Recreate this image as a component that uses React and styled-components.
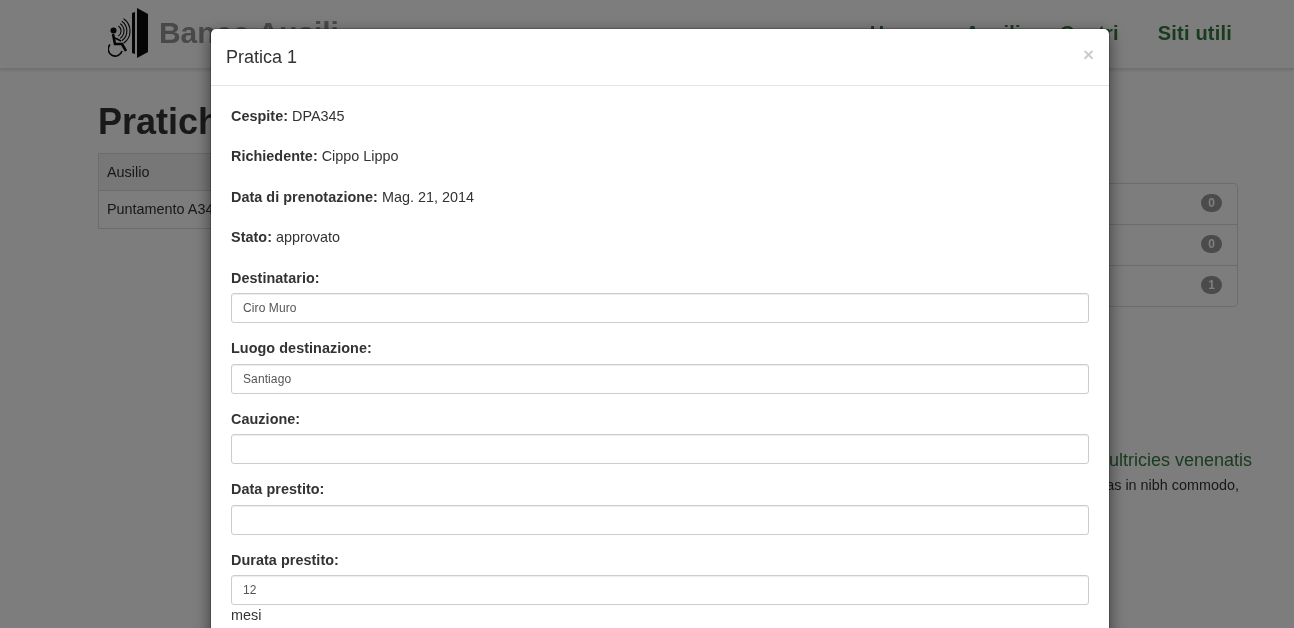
import React from "react";
import styled, { createGlobalStyle } from "styled-components";

const Global = createGlobalStyle`
  html, body { margin: 0; padding: 0; height: 100%; overflow: hidden; background: #fff; }
  body { font-family: Helvetica, "Liberation Sans", Arial, sans-serif; font-size: 14.4px; line-height: 1.42; color: #333; text-rendering: optimizeSpeed; }
  b { letter-spacing: .03px; }
  * { box-sizing: border-box; }
`;

const Page = styled.div`
  will-change: transform;
`;
const Header = styled.header`
  height: 69px;
  border-bottom: 1px solid #e7e7e7;
  box-shadow: 0 1px 3px rgba(0,0,0,.15);
  display: flex;
  align-items: center;
  justify-content: space-between;
  padding: 0 62px 2px 108px;
`;
const Brand = styled.div`
  display: flex;
  align-items: center;
  gap: 8px;
  font-size: 29.9px;
  font-weight: 700;
  color: #969696;
`;
const Nav = styled.nav`
  display: flex;
  gap: 39px;
`;
const NavLink = styled.a`
  font-size: 20px;
  font-weight: 700;
  letter-spacing: .2px;
  color: #347a40;
`;
const Main = styled.main`
  display: grid;
  grid-template-columns: 1fr 300px;
  gap: 30px;
  padding: 0 56px 0 98px;
`;
const Title = styled.h1`
  margin: 31px 0 9px;
  font-size: 36px;
  line-height: 44px;
  font-weight: 700;
`;
const Table = styled.table`
  width: 100%;
  border-collapse: collapse;
  th, td { border: 1px solid #ddd; padding: 8px; font-weight: 400; text-align: left; }
  th { background: #f2f2f2; }
`;
const Side = styled.aside`
  padding-top: 114px;
`;
const List = styled.ul`
  list-style: none;
  margin: 0;
  padding: 0;
  border: 1px solid #ddd;
  border-radius: 4px;
`;
const Item = styled.li`
  display: flex;
  justify-content: flex-end;
  align-items: center;
  height: 40px;
  padding: 0 15px 2px 10px;
  & + & { height: 41px; border-top: 1px solid #ddd; }
`;
const Badge = styled.span`
  min-width: 21px;
  height: 18px;
  border-radius: 10px;
  background: #9a9a9a;
  color: #fff;
  font-size: 12px;
  font-weight: 700;
  line-height: 18px;
  text-align: center;
`;
const News = styled.div`
  margin: 141px -14px 0 0;
  text-align: right;
  white-space: nowrap;
`;
const NewsTitle = styled.div`
  font-size: 18px;
  line-height: 25px;
  color: #347a40;
`;
const NewsText = styled.div`
  margin: 2px 13px 0 0;
  line-height: 21px;
`;

const Backdrop = styled.div`
  position: fixed;
  inset: 0;
  background: rgba(0,0,0,.51);
`;
const Dialog = styled.div`
  position: fixed;
  top: 28px;
  left: 210px;
  width: 900px;
  background: #fff;
  border: 1px solid rgba(0,0,0,.2);
  background-clip: padding-box;
  border-radius: 6px;
  box-shadow: 0 5px 15px rgba(0,0,0,.5);
  will-change: transform;
`;
const DialogHeader = styled.div`
  display: flex;
  justify-content: space-between;
  align-items: flex-start;
  padding: 15px;
  border-bottom: 1px solid #e5e5e5;
`;
const DialogTitle = styled.h4`
  margin: 0;
  font-size: 18px;
  font-weight: 400;
  line-height: 26px;
`;
const Close = styled.button`
  border: 0;
  background: none;
  padding: 0;
  margin-top: 1px;
  font-family: inherit;
  font-size: 19px;
  font-weight: 700;
  line-height: 1;
  color: #000;
  opacity: .2;
`;
const DialogBody = styled.div`
  padding: 20px;
`;
const Info = styled.p`
  margin: 0 0 20px;
`;
const Field = styled.div`
  margin-bottom: 15px;
`;
const Label = styled.label`
  display: block;
  margin-bottom: 5px;
  font-weight: 700;
  letter-spacing: .05px;
`;
const Input = styled.input`
  display: block;
  width: 100%;
  height: 30px;
  padding: 5px 11px;
  font-family: inherit;
  font-size: 12px;
  line-height: 1.5;
  letter-spacing: .1px;
  color: #555;
  background: #fff;
  border: 1px solid #ccc;
  border-radius: 3px;
  box-shadow: inset 0 1px 1px rgba(0,0,0,.075);
`;

const Logo = () => (
  <svg width="43" height="52" viewBox="0 0 43 52" fill="none">
    <path d="M24 6 L27 5 L27 47 L24 46 Z" fill="#0c0c0c" />
    <path d="M29 1 L40 7 L40 45 L29 51 Z" fill="#0c0c0c" />
    <circle cx="5.5" cy="23.5" r="3" fill="#0c0c0c" />
    <path d="M5 27 L7 37 L14 37 L18 44" stroke="#0c0c0c" strokeWidth="2.6" />
    <path d="M7 31 L13 34" stroke="#0c0c0c" strokeWidth="1.6" />
    <path d="M2 37.5 A7 7 0 1 0 14 44" stroke="#0c0c0c" strokeWidth="1.6" />
    <path d="M10.4 19 A6 6 0 0 1 10.4 29 M12.1 16.6 A9 9 0 0 1 12.1 31.4 M13.8 14.2 A12 12 0 0 1 13.8 33.8 M15.6 11.7 A15 15 0 0 1 15.6 36.3" stroke="#0c0c0c" strokeWidth="1.1" />
  </svg>
);

const fields = [
  ["Destinatario:", "Ciro Muro"],
  ["Luogo destinazione:", "Santiago"],
  ["Cauzione:", ""],
  ["Data prestito:", ""],
  ["Durata prestito:", "12"],
];

export default function App() {
  return (
    <>
      <Global />
      <Page>
        <Header>
          <Brand><Logo />Banco Ausili</Brand>
          <Nav>
            <NavLink>Home</NavLink>
            <NavLink>Ausili</NavLink>
            <NavLink>Centri</NavLink>
            <NavLink>Siti utili</NavLink>
          </Nav>
        </Header>
        <Main>
          <section>
            <Title>Pratiche</Title>
            <Table>
              <thead><tr><th>Ausilio</th><th>Cespite</th></tr></thead>
              <tbody><tr><td>Puntamento A345</td><td>DPA345</td></tr></tbody>
            </Table>
          </section>
          <Side>
            <List>
              <Item><Badge>0</Badge></Item>
              <Item><Badge>0</Badge></Item>
              <Item><Badge>1</Badge></Item>
            </List>
            <News>
              <NewsTitle>Aenean ultricies venenatis</NewsTitle>
              <NewsText>Maecenas in nibh commodo,</NewsText>
            </News>
          </Side>
        </Main>
      </Page>
      <Backdrop />
      <Dialog>
        <DialogHeader>
          <DialogTitle>Pratica 1</DialogTitle>
          <Close>×</Close>
        </DialogHeader>
        <DialogBody>
          <Info><b>Cespite:</b> DPA345</Info>
          <Info><b>Richiedente:</b> Cippo Lippo</Info>
          <Info><b>Data di prenotazione:</b> Mag. 21, 2014</Info>
          <Info><b>Stato:</b> approvato</Info>
          {fields.map(([label, value]) => (
            <Field key={label}>
              <Label>{label}</Label>
              <Input defaultValue={value} />
              {label.startsWith("Durata") && "mesi"}
            </Field>
          ))}
        </DialogBody>
      </Dialog>
    </>
  );
}
